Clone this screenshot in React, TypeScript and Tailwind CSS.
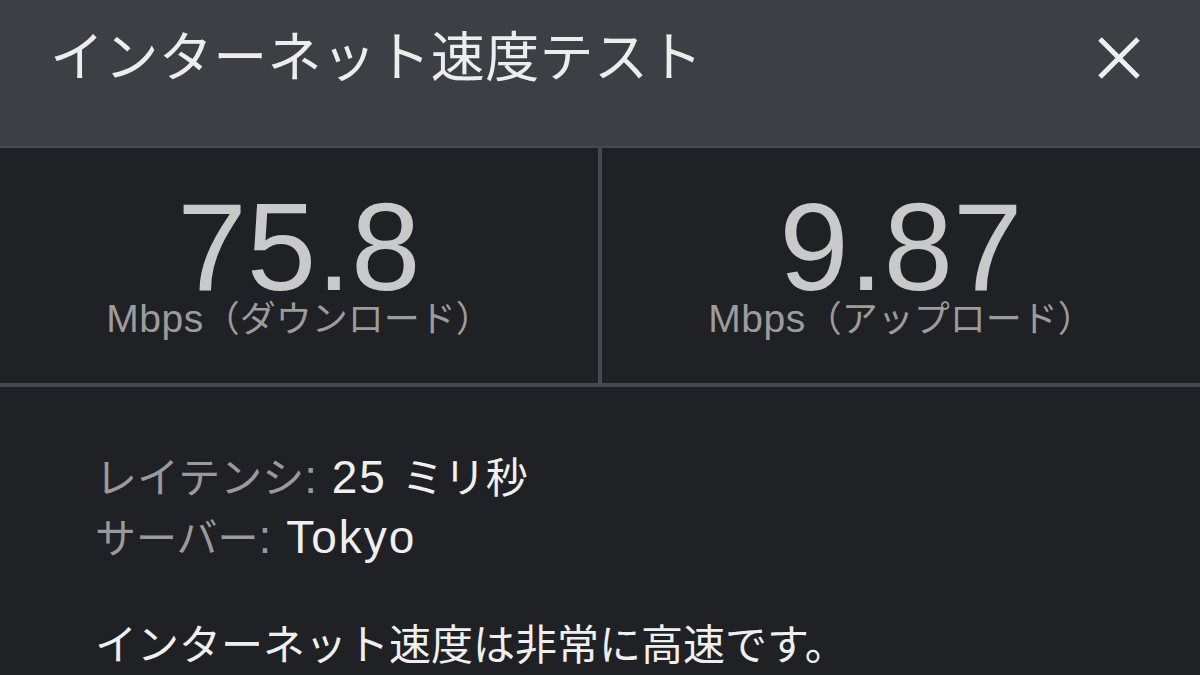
import React from "react";

const latin = "font-['Liberation_Sans','Noto_Sans_CJK_JP',sans-serif]";
const cjk = "font-['Noto_Sans_CJK_JP','Liberation_Sans',sans-serif]";

function Panel({ value, label }: { value: string; label: string }) {
  return (
    <div className={`bg-[#202125] h-[235px] flex flex-col items-center pt-[59px] ${latin}`}>
      <div className="text-[125px] leading-[80px] text-[#c9c9c9]">{value}</div>
      <div className="text-[39px] leading-[40px] mt-[11px] text-[#9c9c9c] whitespace-nowrap">
        <span className="leading-none tracking-[0.5px]">Mbps</span>
        <span className={`text-[36px] leading-none ${cjk}`}>{label}</span>
      </div>
    </div>
  );
}

export default function App() {
  return (
    <div className="w-[1200px] h-[675px] bg-[#202125] overflow-hidden">
      <div className="h-[146px] bg-[#3c3f43] flex items-start justify-between pl-[50px] pr-[58px] pt-[24px]">
        <div className={`text-[54px] leading-[60px] tracking-[0.4px] text-[#ededed] ${cjk}`}>インターネット速度テスト</div>
        <svg width="44" height="44" viewBox="0 0 44 44" className="mt-[12px] mr-[1px]">
          <path d="M3 3 L41 41 M41 3 L3 41" stroke="#efefef" strokeWidth="5" strokeLinecap="butt" />
        </svg>
      </div>
      <div className="grid grid-cols-2 gap-[4px] bg-[#46494d] pt-[2px] pb-[4px]">
        <Panel value="75.8" label="（ダウンロード）" />
        <Panel value="9.87" label="（アップロード）" />
      </div>
      <div className={`pl-[95px] pt-[60px] text-[46px] leading-[60px] ${latin}`}>
        <div className="whitespace-nowrap">
          <span className={`text-[#9a9a9a] text-[42px] leading-none ${cjk}`}>レイテンシ</span>
          <span className="text-[#9a9a9a] leading-none">:</span>
          <span className="text-[#efefef] leading-none tracking-[2px]"> 25 </span>
          <span className={`text-[#efefef] text-[42px] leading-none ${cjk}`}>ミリ秒</span>
        </div>
        <div className="whitespace-nowrap">
          <span className={`text-[#9a9a9a] text-[41px] leading-none ${cjk}`}>サーバー</span>
          <span className="text-[#9a9a9a] leading-none">:</span>
          <span className="text-[#efefef] leading-none tracking-[2px]"> Tokyo</span>
        </div>
        <div className={`mt-[45px] whitespace-nowrap text-[#efefef] text-[42px] ${cjk}`}>インターネット速度は非常に高速です。</div>
      </div>
    </div>
  );
}
